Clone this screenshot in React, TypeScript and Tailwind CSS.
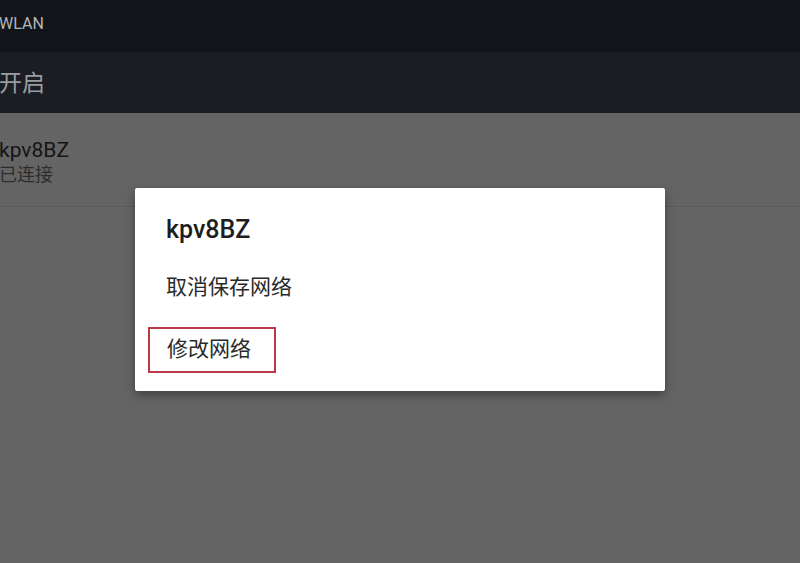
export default function App() {
  return (
    <div
      className="relative h-[563px] w-[800px] overflow-hidden bg-[#646464]"
      style={{ fontFamily: 'Roboto, "Noto Sans CJK SC", sans-serif' }}
    >
      {/* Top bar */}
      <div className="flex h-[52px] items-center bg-[#111519] pb-[4px]">
        <span className="-ml-[1px] text-[16px] text-[#b4b6b8]">WLAN</span>
      </div>

      {/* Switch row */}
      <div className="flex h-[61px] items-center bg-[#1a1d23] pt-[4px]">
        <span className="-ml-[1px] text-[23px] text-[#9a9c9f]">开启</span>
      </div>

      {/* Network list */}
      <div className="flex h-[94px] flex-col justify-center border-b border-[#5a5a5a] pt-[4px]">
        <span className="-ml-[1px] text-[21px] leading-[26px] text-[#141414]">kpv8BZ</span>
        <span className="-ml-[1px] text-[18px] leading-[24px] text-[#2c2c2c]">已连接</span>
      </div>

      {/* Dialog */}
      <div className="absolute left-[135px] top-[188px] flex h-[203px] w-[530px] flex-col rounded-[2px] bg-white shadow-[0_4px_10px_rgba(0,0,0,0.35)]">
        <div className="px-[31px] pt-[26px] text-[25px] font-medium leading-[32px] text-[#1e1e1e]">
          kpv8BZ
        </div>
        <div className="px-[31px] pt-[27px] text-[21px] leading-[28px] text-[#2a2a2a]">取消保存网络</div>
        <div className="mt-[26px] ml-[13px] flex h-[46px] w-[128px] items-center border-2 border-[#bc3a46] px-[17px] text-[21px] text-[#2a2a2a]">
          修改网络
        </div>
      </div>
    </div>
  );
}
